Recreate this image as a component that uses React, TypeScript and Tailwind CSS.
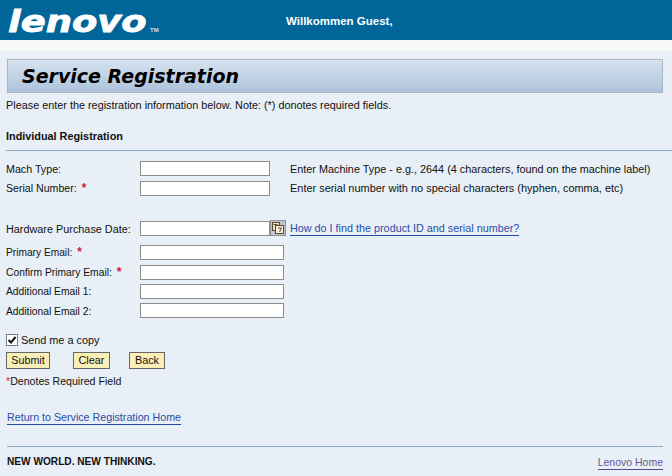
const font = { fontFamily: '"Liberation Sans", Arial, sans-serif' };

function Req() {
  return <span className="ml-[5px] text-[#d4143c] font-bold text-[12px]">*</span>;
}

function Row({ label, req, wide, className, labelClass, children }: { label: string; req?: boolean; wide?: boolean; className: string; labelClass: string; children?: React.ReactNode }) {
  return (
    <div className={`flex items-center h-[15px] ${className}`}>
      <div className={`w-[134px] shrink-0 whitespace-nowrap ${labelClass}`}>
        {label}
        {req && <Req />}
      </div>
      <div className={`h-[15px] bg-white border border-[#8c8c8c] box-border shrink-0 ${wide ? "w-[144px]" : "w-[130px]"}`} />
      {children}
    </div>
  );
}

function Btn({ label, className }: { label: string; className: string }) {
  return (
    <div className={`h-[17px] bg-[#fbefb8] border border-[#666666] flex items-center justify-center box-border ${className}`}>
      {label}
    </div>
  );
}

export default function App() {
  return (
    <div className="w-[672px] h-[476px] overflow-hidden bg-[#e8eff6] text-[10.85px] leading-[13px] text-[#111]" style={font}>
      <header className="h-[40px] bg-[#006699] flex items-center">
        <div className="w-[286px] pl-[8px] flex items-end shrink-0 h-[40px] pb-[7px]">
          <span className="text-white font-bold italic text-[31px] leading-[24px] [font-family:'DejaVu_Sans',sans-serif] [-webkit-text-stroke:0.8px_white] scale-x-[1.19] origin-left w-[142px]">lenovo</span>
          <span className="text-[#cfe0ea] text-[6px] leading-[8px] font-bold -mb-[1px]">TM</span>
        </div>
        <span className="text-white font-bold text-[11.5px] mt-[2px]">Willkommen Guest,</span>
      </header>
      <div className="h-[11px] bg-[#f6f8fa]" />
      <div className="h-[34px] mx-[7px] mt-[8px] w-[656px] border border-[#a9b8c6] bg-gradient-to-b from-[#d6e2ef] to-[#adc3da] flex items-center pl-[14px] box-border">
        <h1 className="font-bold italic text-[19px] text-black [font-family:'DejaVu_Sans',sans-serif]">Service Registration</h1>
      </div>
      <p className="pl-[6px] mt-[6px]">Please enter the registration information below. Note: (*) donotes required fields.</p>
      <div className="pl-[6px] mt-[18px] font-bold">Individual Registration</div>
      <div className="ml-[6px] mt-[7px] h-px bg-[#8fa8c4]" />
      <div className="pl-[6px]">
        <Row label="Mach Type:" className="mt-[10px]" labelClass="mt-[1px] text-[10.7px]">
          <span className="ml-[20px] whitespace-nowrap mt-[1px]">Enter Machine Type - e.g., 2644 (4 characters, found on the machine label)</span>
        </Row>
        <Row label="Serial Number:" req className="mt-[5px]" labelClass="text-[10.6px]">
          <span className="ml-[20px] whitespace-nowrap text-[10.95px]">Enter serial number with no special characters (hyphen, comma, etc)</span>
        </Row>
        <Row label="Hardware Purchase Date:" className="mt-[25px]" labelClass="mt-[1px]">
          <div className="w-[16px] h-[16px] -mt-[2px] bg-[#bcc5cc] border border-[#8c949a] box-border flex items-center justify-center shrink-0">
            <svg width="12" height="12" viewBox="0 0 12 12">
              <rect x="0.5" y="0.5" width="7" height="8" fill="#e8dfc8" stroke="#5a4a30" />
              <rect x="1.5" y="2" width="4" height="1" fill="#5a4a30" />
              <rect x="3.5" y="3.5" width="8" height="8" fill="#f6f0e0" stroke="#5a4a30" />
              <path d="M6 6h3.5L7.5 10" fill="none" stroke="#7a3a20" strokeWidth="1" />
            </svg>
          </div>
          <a className="ml-[4px] text-[#2a4ea8] border-b border-[#1f4aa0] whitespace-nowrap leading-[14px] -mt-[1px] text-[10.8px]">How do I find the product ID and serial number?</a>
        </Row>
        <Row label="Primary Email:" req wide className="mt-[9px]" labelClass="text-[10.2px]" />
        <Row label="Confirm Primary Email:" req wide className="mt-[4px] !h-[16px]" labelClass="text-[10.3px]" />
        <Row label="Additional Email 1:" wide className="mt-[4px]" labelClass="text-[10.3px]" />
        <Row label="Additional Email 2:" wide className="mt-[4px]" labelClass="mt-[1px] text-[10.3px]" />
        <div className="flex items-center mt-[16px] h-[12px]">
          <div className="w-[12px] h-[12px] bg-white border border-[#7a7a7a] box-border flex items-center justify-center">
            <svg width="10" height="10" viewBox="0 0 10 10">
              <path d="M1.5 5l2.5 2.5L8.5 2" fill="none" stroke="#111" strokeWidth="2" />
            </svg>
          </div>
          <span className="ml-[3px]">Send me a copy</span>
        </div>
        <div className="flex mt-[6px]">
          <Btn label="Submit" className="w-[44px] text-[10.7px]" />
          <Btn label="Clear" className="w-[37px] ml-[23px]" />
          <Btn label="Back" className="w-[36px] ml-[19px]" />
        </div>
        <div className="mt-[6px] text-[10.6px]"><span className="text-[#d4143c]">*</span>Denotes Required Field</div>
      </div>
      <div className="pl-[7px] mt-[22px]">
        <a className="text-[#2a4ea8] border-b border-[#1f4aa0] inline-block leading-[14px] text-[10.7px]">Return to Service Registration Home</a>
      </div>
      <div className="ml-[7px] w-[656px] mt-[21px] h-px bg-[#8fa8c4]" />
      <div className="ml-[7px] w-[656px] flex justify-between mt-[8px]">
        <span className="font-bold text-[10.15px]">NEW WORLD. NEW THINKING.</span>
        <a className="text-[#6a5a98] border-b border-[#5a4a88] leading-[14px] text-[10.5px]">Lenovo Home</a>
      </div>
    </div>
  );
}
